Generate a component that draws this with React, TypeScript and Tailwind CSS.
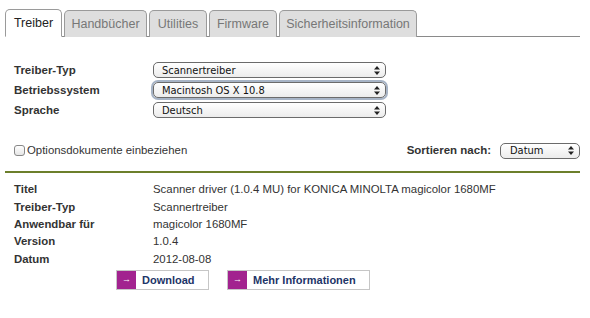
import React from "react";

const font = { fontFamily: '"Liberation Sans", Arial, Helvetica, sans-serif' };
const selFont = { fontFamily: '"DejaVu Sans Condensed", "DejaVu Sans", "Lucida Grande", sans-serif' };

function Arrows() {
  return (
    <svg width="6" height="9" viewBox="0 0 6 9" className="shrink-0">
      <polygon points="3,0 6,3.5 0,3.5" fill="#222" />
      <polygon points="0,5.5 6,5.5 3,9" fill="#222" />
    </svg>
  );
}

function Select({ value, width, focused, pl }: { value: string; width: string; focused?: boolean; pl: string }) {
  return (
    <div
      className={`${width} ${pl} h-[16px] flex items-center justify-between rounded-[5px] border border-[#6b6b6b] bg-gradient-to-b from-[#ffffff] to-[#ececec] pr-[5px] text-[11px] text-[#111] ${
        focused ? "shadow-[0_0_0_2px_#a7b4c6]" : ""
      }`}
      style={selFont}
    >
      <span className="leading-none">{value}</span>
      <Arrows />
    </div>
  );
}

function Tab({ label, active, width }: { label: string; active?: boolean; width: string }) {
  return (
    <div
      className={`${width} flex items-center justify-center rounded-t-[5px] border border-[#9a9a9a] text-[12.5px] ${
        active
          ? "bg-white text-[#222] border-b-white h-[28px] relative z-10"
          : "bg-[#dedede] text-[#777] border-b-0 h-[27px]"
      }`}
    >
      {label}
    </div>
  );
}

function Btn({ label, width }: { label: string; width: string }) {
  return (
    <div className={`${width} h-[20px] flex border border-[#c6c6c6] bg-white`}>
      <div className="w-[19px] h-full bg-[#a2238f] flex items-center justify-center text-white text-[9px]">
        →
      </div>
      <div className="flex items-center pl-[6px] text-[11px] font-bold text-[#1d3568]">{label}</div>
    </div>
  );
}

export default function App() {
  const details: [string, string][] = [
    ["Titel", "Scanner driver (1.0.4 MU) for KONICA MINOLTA magicolor 1680MF"],
    ["Treiber-Typ", "Scannertreiber"],
    ["Anwendbar für", "magicolor 1680MF"],
    ["Version", "1.0.4"],
    ["Datum", "2012-08-08"],
  ];
  return (
    <div className="w-[590px] h-[318px] bg-white text-[#333] overflow-hidden" style={font}>
      <div className="pt-[8px] pl-[5px] pr-[10px]">
        {/* Tabs */}
        <div className="flex items-end border-b border-[#8a8a8a] h-[29px]">
          <div className="-mb-px flex items-end gap-[2px]">
            <Tab label="Treiber" active width="w-[57px]" />
            <Tab label="Handbücher" width="w-[83px]" />
            <Tab label="Utilities" width="w-[58px]" />
            <Tab label="Firmware" width="w-[68px]" />
            <Tab label="Sicherheitsinformation" width="w-[138px]" />
          </div>
        </div>

        {/* Form */}
        <div className="mt-[25px] pl-[9px] flex flex-col gap-[4px]">
          {[
            ["Treiber-Typ", "Scannertreiber", false],
            ["Betriebssystem", "Macintosh OS X 10.8", true],
            ["Sprache", "Deutsch", false],
          ].map(([l, v, f]) => (
            <div key={l as string} className="flex items-center h-[16px]">
              <div className="w-[139px] text-[11.5px] font-bold text-[#333] pt-[2px]">{l as string}</div>
              <Select value={v as string} width="w-[233px]" pl="pl-[8px]" focused={f as boolean} />
            </div>
          ))}
        </div>

        {/* Options row */}
        <div className="mt-[24px] pl-[9px] flex items-center justify-between h-[17px]">
          <div className="flex items-center text-[11.4px] text-[#333]">
            <div className="w-[11px] h-[11px] rounded-[3px] border border-[#888] bg-gradient-to-b from-white to-[#e6e6e6]" />
            <span className="ml-[2px]">Optionsdokumente einbeziehen</span>
          </div>
          <div className="flex items-center">
            <span className="text-[11.5px] font-bold text-[#333] mr-[9px]">Sortieren nach:</span>
            <Select value="Datum" width="w-[80px]" pl="pl-[9px]" />
          </div>
        </div>

        {/* Green line */}
        <div className="mt-[12px] h-[2px] bg-[#6c7f2b]" />

        {/* Details */}
        <div className="mt-[8px] pl-[9px] flex flex-col">
          {details.map(([l, v]) => (
            <div key={l} className="flex h-[17.4px] items-center text-[11.4px]">
              <div className="w-[139px] font-bold text-[#333]">{l}</div>
              <div className="text-[#333]">{v}</div>
            </div>
          ))}
        </div>

        {/* Buttons */}
        <div className="mt-[2px] pl-[111px] flex gap-[18px]">
          <Btn label="Download" width="w-[93px]" />
          <Btn label="Mehr Informationen" width="w-[143px]" />
        </div>
      </div>
    </div>
  );
}
